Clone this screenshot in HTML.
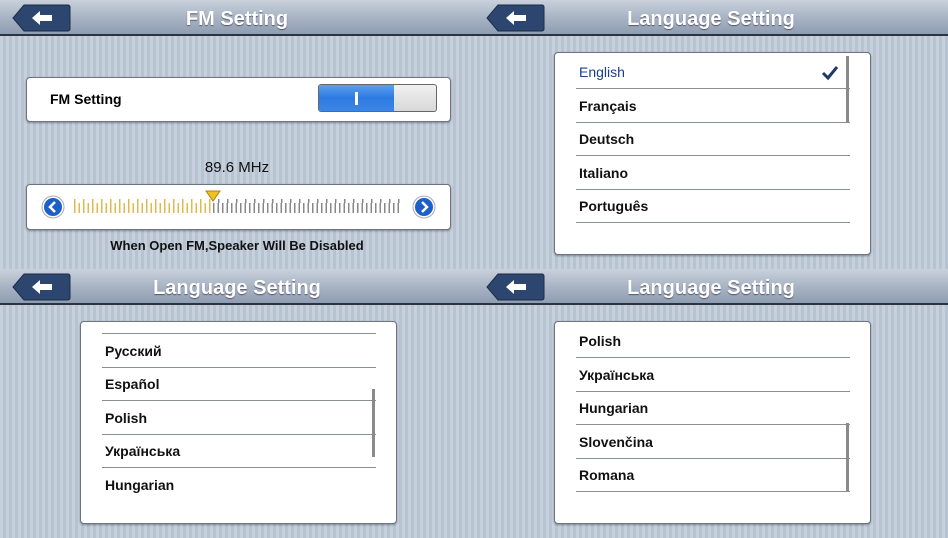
<!DOCTYPE html>
<html><head><meta charset="utf-8"><style>
*{margin:0;padding:0;box-sizing:border-box}
body{width:948px;height:538px;overflow:hidden;background:#fff;font-family:"Liberation Sans","DejaVu Sans",sans-serif;position:relative}
.q{position:absolute;width:474px;height:269px;overflow:hidden;
background:repeating-linear-gradient(90deg,#c7d1dd 0,#c7d1dd 3px,#b7c3d1 3px,#b7c3d1 6px)}
.hd{position:absolute;left:0;top:0;width:474px;height:36px;background:linear-gradient(#c9d1dc,#a9b5c5 50%,#8f9db2);border-bottom:2px solid #2c3444}
.hd .t{position:absolute;left:0;right:0;top:8px;text-align:center;color:#fff;font-weight:bold;font-size:20px;text-shadow:0 1px 1px #556}
.bk{position:absolute;left:12px;top:4px;width:59px;height:28px}
.box{position:absolute;background:#fff;border:1px solid #6c7480;border-radius:4px;box-shadow:0 1px 2px rgba(0,0,0,.35)}
.lst{left:80px;top:52px;width:317px;height:203px}
.row{position:absolute;left:21px;width:274px;height:34px;border-bottom:1px solid #8a8f96;font-size:14px;font-weight:bold;color:#111;padding-left:3px;line-height:34px}
.sb{position:absolute;width:3px;background:#8a8a8a;left:291px}
.ck{position:absolute;left:266px;top:12px}
.tk{position:absolute}
</style></head><body>

<!-- Q1 -->
<div class="q" style="left:0;top:0">
<div class="hd"><svg class="bk" viewBox="0 0 59 28"><path d="M12 1H56a2 2 0 0 1 2 2V25a2 2 0 0 1-2 2H12L1 14Z" fill="#2d4670" stroke="#1c2c48"/><path d="M20 14l8-7v4h12v6H28v4z" fill="#fff"/></svg><div class="t">FM Setting</div></div>
<div class="box" style="left:26px;top:77px;width:425px;height:45px">
<div style="position:absolute;left:23px;top:13px;font-size:14px;font-weight:bold">FM Setting</div>
<div style="position:absolute;left:291px;top:6px;width:119px;height:28px;border:1px solid #666;border-radius:3px;overflow:hidden;background:linear-gradient(#f0f0f0,#d8d8d8)">
<div style="position:absolute;left:0;top:0;width:75px;height:26px;background:linear-gradient(#5aa0f0,#2d7ae0 50%,#3a86ea)"></div>
<div style="position:absolute;left:36px;top:7px;width:3px;height:13px;background:#fff"></div>
</div></div>
<div style="position:absolute;left:0;width:474px;top:159px;text-align:center;font-size:15px;color:#111">89.6 MHz</div>
<div class="box" style="left:26px;top:184px;width:425px;height:46px">
<svg style="position:absolute;left:14px;top:10px" width="24" height="24"><circle cx="12" cy="12" r="11" fill="#fff" stroke="#aab"/><circle cx="12" cy="12" r="9" fill="#1d5fc8"/><path d="M14 7l-5 5 5 5" stroke="#fff" stroke-width="2.5" fill="none"/></svg>
<svg style="position:absolute;left:385px;top:10px" width="24" height="24"><circle cx="12" cy="12" r="11" fill="#fff" stroke="#aab"/><circle cx="12" cy="12" r="9" fill="#1d5fc8"/><path d="M10 7l5 5-5 5" stroke="#fff" stroke-width="2.5" fill="none"/></svg>
<div class="tk" style="left:47px;top:18px;width:139px;height:10px;background:repeating-linear-gradient(90deg,#e0b850 0,#e0b850 1.5px,transparent 1.5px,transparent 4.5px)"></div>
<div class="tk" style="left:47px;top:14px;width:139px;height:4px;background:repeating-linear-gradient(90deg,#e0b850 0,#e0b850 1.5px,transparent 1.5px,transparent 9px)"></div>
<div class="tk" style="left:186px;top:18px;width:187px;height:10px;background:repeating-linear-gradient(90deg,#888 0,#888 1.5px,transparent 1.5px,transparent 4.5px)"></div>
<div class="tk" style="left:190.5px;top:14px;width:183px;height:4px;background:repeating-linear-gradient(90deg,#888 0,#888 1.5px,transparent 1.5px,transparent 9px)"></div>
<svg style="position:absolute;left:178px;top:5px" width="16" height="12"><path d="M1 1h14L8 11z" fill="#f0c020" stroke="#b08010"/></svg>
</div>
<div style="position:absolute;left:0;width:474px;top:238px;text-align:center;font-size:13px;font-weight:bold;color:#111">When Open FM,Speaker Will Be Disabled</div>
</div>

<!-- Q2 -->
<div class="q" style="left:474px;top:0">
<div class="hd"><svg class="bk" viewBox="0 0 59 28"><path d="M12 1H56a2 2 0 0 1 2 2V25a2 2 0 0 1-2 2H12L1 14Z" fill="#2d4670" stroke="#1c2c48"/><path d="M20 14l8-7v4h12v6H28v4z" fill="#fff"/></svg><div class="t">Language Setting</div></div>
<div class="box lst">
<div class="row" style="top:2px;color:#1a3f8a;font-weight:normal">English</div>
<div class="row" style="top:36px">Français</div>
<div class="row" style="top:69px">Deutsch</div>
<div class="row" style="top:103px">Italiano</div>
<div class="row" style="top:136px">Português</div>
<div class="sb" style="top:3px;height:67px"></div>
<svg class="ck" width="18" height="16"><path d="M2 8l5 5 9-11" stroke="#1e3a6a" stroke-width="3" fill="none"/></svg>
</div></div>

<!-- Q3 -->
<div class="q" style="left:0;top:269px">
<div class="hd"><svg class="bk" viewBox="0 0 59 28"><path d="M12 1H56a2 2 0 0 1 2 2V25a2 2 0 0 1-2 2H12L1 14Z" fill="#2d4670" stroke="#1c2c48"/><path d="M20 14l8-7v4h12v6H28v4z" fill="#fff"/></svg><div class="t">Language Setting</div></div>
<div class="box lst">
<div class="row" style="top:-22px;height:34px"></div>
<div class="row" style="top:12px">Русский</div>
<div class="row" style="top:45px">Español</div>
<div class="row" style="top:79px">Polish</div>
<div class="row" style="top:112px">Українська</div>
<div class="row" style="top:146px;border-bottom:none">Hungarian</div>
<div class="sb" style="top:67px;height:68px"></div>
</div></div>

<!-- Q4 -->
<div class="q" style="left:474px;top:269px">
<div class="hd"><svg class="bk" viewBox="0 0 59 28"><path d="M12 1H56a2 2 0 0 1 2 2V25a2 2 0 0 1-2 2H12L1 14Z" fill="#2d4670" stroke="#1c2c48"/><path d="M20 14l8-7v4h12v6H28v4z" fill="#fff"/></svg><div class="t">Language Setting</div></div>
<div class="box lst">
<div class="row" style="top:2px">Polish</div>
<div class="row" style="top:36px">Українська</div>
<div class="row" style="top:69px">Hungarian</div>
<div class="row" style="top:103px">Slovenčina</div>
<div class="row" style="top:136px">Romana</div>
<div class="sb" style="top:101px;height:68px"></div>
</div></div>
</body></html>
